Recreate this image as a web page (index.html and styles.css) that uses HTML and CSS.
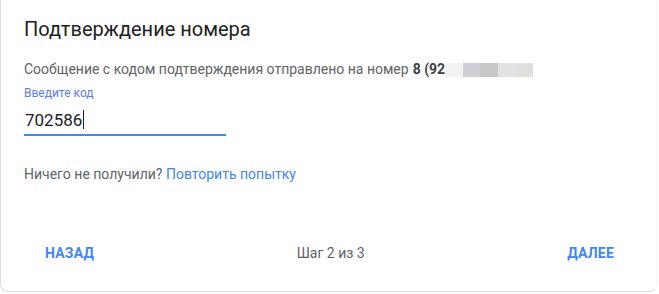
FILE: index.html
```html
<!DOCTYPE html>
<html lang="ru">
<head>
<meta charset="utf-8">
<link rel="stylesheet" href="styles.css">
</head>
<body>
<div class="card">
  <h1 class="title">Подтверждение номера</h1>
  <p class="desc">Сообщение с кодом подтверждения отправлено на номер <b>8 (92</b><span class="blur"><i class="b1"></i><i class="b2"></i><i class="b3"></i><i class="b4"></i><i class="b5"></i></span></p>
  <div class="field">
    <label class="label">Введите код</label>
    <div class="input"><span>702586</span><span class="caret"></span></div>
  </div>
  <p class="retry">Ничего не получили? <a class="link">Повторить попытку</a></p>
  <div class="footer">
    <a class="btn">НАЗАД</a>
    <span class="step">Шаг 2 из 3</span>
    <a class="btn">ДАЛЕЕ</a>
  </div>
</div>
</body>
</html>
```
FILE: styles.css
```css
html, body { margin: 0; padding: 0; background: #fff; }
body { font-family: Roboto, "Noto Sans", sans-serif; width: 659px; height: 294px; overflow: hidden; }
.card {
  box-sizing: border-box;
  width: 657px;
  height: 292px;
  border-left: 1px solid #dadce0;
  border-bottom: 1px solid #dadce0;
  border-right: 1px solid #f6f6f6;
  border-radius: 0 0 8px 8px;
  padding: 15px 23px 0 23px;
  display: flex;
  flex-direction: column;
}
.title { margin: 0; font-size: 20px; font-weight: 400; color: #202124; line-height: 28px; }
.desc { margin: 16px 0 0; font-size: 14px; color: #5f6368; line-height: 20px; display: flex; align-items: center; white-space: nowrap; }
.desc b { color: #3c4043; font-weight: 700; margin-left: 4px; }
.blur { display: inline-flex; height: 14px; margin-top: 1px; }
.blur i { display: block; height: 14px; }
.b1 { width: 18px; background: #f3f3f1; }
.b2 { width: 17px; background: #cdcfd4; }
.b3 { width: 18px; background: #c8c8c6; }
.b4 { width: 18px; background: #e1e2e2; }
.b5 { width: 17px; background: #e0e0dc; }
.field { margin-top: 6px; width: 202px; }
.label { display: block; font-size: 12px; color: #5a7df2; line-height: 16px; }
.input { margin-top: 4px; height: 29px; border-bottom: 2px solid #4285f4; display: flex; align-items: center; font-size: 17px; color: #202124; padding-left: 1px; }
.caret { display: inline-block; width: 1px; height: 19px; background: #202124; margin-left: 1px; }
.retry { margin: 28px 0 0; font-size: 14px; color: #5f6368; line-height: 20px; }
.link { color: #4285f4; text-decoration: none; }
.footer { margin-top: auto; margin-bottom: 30px; display: flex; justify-content: space-between; align-items: center; padding: 0 19px 0 21px; }
.btn { font-size: 14px; font-weight: 700; color: #4285f4; letter-spacing: 0.2px; text-decoration: none; }
.step { font-size: 14px; color: #5f6368; }
```
